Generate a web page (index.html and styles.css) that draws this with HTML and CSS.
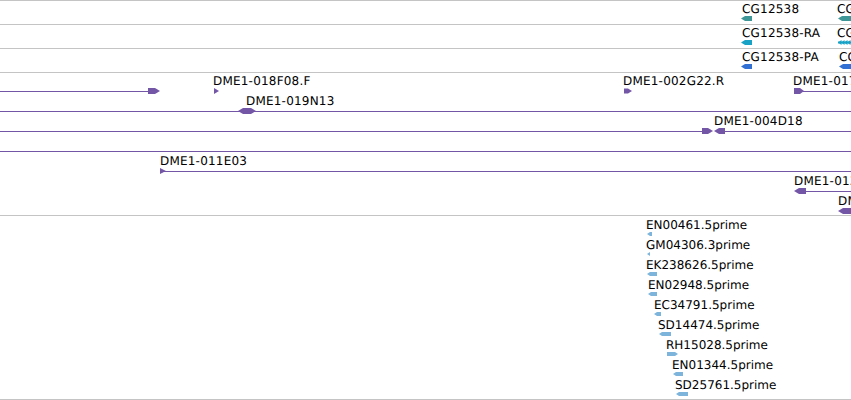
FILE: index.html
```html
<!DOCTYPE html>
<html>
<head>
<meta charset="utf-8">
<link rel="stylesheet" href="styles.css">
</head>
<body>
<div class="view">
  <div class="track gene">
    <div class="feat" style="left:741px"><span class="lbl" style="left:1px">CG12538</span>
      <svg class="g" width="11" height="5" viewBox="0 0 11 5"><polygon class="teal" points="0,2.5 4,0 11,0 11,5 4,5"/></svg></div>
    <div class="feat" style="left:838px"><span class="lbl">CG12539</span>
      <svg class="g" width="13" height="5" viewBox="0 0 13 5"><polygon class="teal" points="0,2.5 4,0 13,0 13,5 4,5"/></svg></div>
  </div>
  <div class="track gene">
    <div class="feat" style="left:741px"><span class="lbl" style="left:1px">CG12538-RA</span>
      <svg class="g" width="11" height="5" viewBox="0 0 11 5"><polygon class="cyan" points="0,2.5 4,0 11,0 11,5 4,5"/></svg></div>
    <div class="feat" style="left:838px"><span class="lbl">CG12539-RA</span>
      <svg class="g" width="13" height="5" viewBox="0 0 13 5"><rect class="cyan" x="0" y="1.5" width="13" height="2"/><polygon class="cyan" points="0,2.5 3.5,0 3.5,5"/><polygon class="cyan" points="3,2.5 6.5,0 6.5,5"/><polygon class="cyan" points="6,2.5 9.5,0 9.5,5"/><polygon class="cyan" points="9,2.5 12.5,0 12.5,5"/></svg></div>
  </div>
  <div class="track gene">
    <div class="feat" style="left:741px"><span class="lbl" style="left:1px">CG12538-PA</span>
      <svg class="g" width="11" height="5" viewBox="0 0 11 5"><polygon class="blue" points="0,2.5 4,0 11,0 11,5 4,5"/></svg></div>
    <div class="feat" style="left:839px"><span class="lbl" style="left:0px">CG12539-PA</span>
      <svg class="g" width="12" height="5" viewBox="0 0 12 5"><polygon class="blue" points="0,2.5 4,0 12,0 12,5 4,5"/></svg></div>
  </div>

  <div class="track dme">
    <div class="row">
      <div class="ln" style="left:0;width:150px"></div>
      <div class="feat" style="left:148px"><svg class="g" width="12" height="6" viewBox="0 0 12 6"><polygon class="pur" points="0,0 7,0 12,3 7,6 0,6"/></svg></div>
      <div class="feat" style="left:214px"><span class="lbl">DME1-018F08.F</span>
        <svg class="g" width="5" height="6" viewBox="0 0 5 6"><polygon class="pur" points="0,0 5,3 0,6"/></svg></div>
      <div class="feat" style="left:624px"><span class="lbl">DME1-002G22.R</span>
        <svg class="g" width="8" height="6" viewBox="0 0 8 6"><polygon class="pur" points="0,0.5 4,0.5 8,3 4,5.5 0,5.5"/></svg></div>
      <div class="ln" style="left:803px;width:48px"></div>
      <div class="feat" style="left:794px"><span class="lbl">DME1-017C11</span>
        <svg class="g" width="10" height="6" viewBox="0 0 10 6"><polygon class="pur" points="0,0 6,0 10,3 6,6 0,6"/></svg></div>
    </div>
    <div class="row">
      <div class="ln" style="left:0;width:851px"></div>
      <div class="feat" style="left:238px"><span class="lbl" style="left:8px">DME1-019N13</span>
        <svg class="g" width="18" height="6" viewBox="0 0 18 6"><polygon class="pur" points="0,3 5,0 13,0 18,3 13,6 5,6"/></svg></div>
    </div>
    <div class="row">
      <div class="ln" style="left:0;width:702px"></div>
      <div class="ln" style="left:724px;width:127px"></div>
      <div class="feat" style="left:702px"><svg class="g" width="11" height="6" viewBox="0 0 11 6"><polygon class="pur" points="0,0 6,0 11,3 6,6 0,6"/></svg></div>
      <div class="feat" style="left:714px"><span class="lbl" style="left:0">DME1-004D18</span>
        <svg class="g" width="11" height="6" viewBox="0 0 11 6"><polygon class="pur" points="0,3 5,0 11,0 11,6 5,6"/></svg></div>
    </div>
    <div class="row">
      <div class="ln" style="left:0;width:851px"></div>
    </div>
    <div class="row">
      <div class="ln" style="left:160px;width:691px"></div>
      <div class="feat" style="left:160px"><span class="lbl" style="left:0">DME1-011E03</span>
        <svg class="g" width="6" height="6" viewBox="0 0 6 6"><polygon class="pur" points="0,0 6,3 0,6"/></svg></div>
    </div>
    <div class="row">
      <div class="ln" style="left:806px;width:45px"></div>
      <div class="feat" style="left:794px"><span class="lbl" style="left:0">DME1-013B07</span>
        <svg class="g" width="12" height="6" viewBox="0 0 12 6"><polygon class="pur" points="0,3 5,0 12,0 12,6 5,6"/></svg></div>
    </div>
    <div class="row">
      <div class="feat" style="left:838px"><span class="lbl" style="left:0">DME1-020A02</span>
        <svg class="g" width="13" height="6" viewBox="0 0 13 6"><polygon class="pur" points="0,3 5,0 13,0 13,6 5,6"/></svg></div>
    </div>
  </div>

  <div class="track est">
    <div class="row"><div class="feat" style="left:647px"><span class="lbl">EN00461.5prime</span>
      <svg class="g" width="5" height="4" viewBox="0 0 5 4"><polygon class="lb" points="0,2 3,0 5,0 5,4 3,4"/></svg></div></div>
    <div class="row"><div class="feat" style="left:647px"><span class="lbl">GM04306.3prime</span>
      <svg class="g" width="3" height="4" viewBox="0 0 3 4"><polygon class="lb" points="0,2 3,0 3,4"/></svg></div></div>
    <div class="row"><div class="feat" style="left:647px"><span class="lbl">EK238626.5prime</span>
      <svg class="g" width="10" height="4" viewBox="0 0 10 4"><polygon class="lb" points="0,2 3,0 10,0 10,4 3,4"/></svg></div></div>
    <div class="row"><div class="feat" style="left:648px"><span class="lbl" style="left:0">EN02948.5prime</span>
      <svg class="g" width="9" height="4" viewBox="0 0 9 4"><polygon class="lb" points="0,2 3,0 9,0 9,4 3,4"/></svg></div></div>
    <div class="row"><div class="feat" style="left:654px"><span class="lbl" style="left:0">EC34791.5prime</span>
      <svg class="g" width="7" height="4" viewBox="0 0 7 4"><polygon class="lb" points="0,2 3,0 7,0 7,4 3,4"/></svg></div></div>
    <div class="row"><div class="feat" style="left:659px"><span class="lbl">SD14474.5prime</span>
      <svg class="g" width="12" height="4" viewBox="0 0 12 4"><polygon class="lb" points="0,2 3,0 12,0 12,4 3,4"/></svg></div></div>
    <div class="row"><div class="feat" style="left:667px"><span class="lbl">RH15028.5prime</span>
      <svg class="g" width="11" height="4" viewBox="0 0 11 4"><polygon class="lb" points="0,0 8,0 11,2 8,4 0,4"/></svg></div></div>
    <div class="row"><div class="feat" style="left:673px"><span class="lbl">EN01344.5prime</span>
      <svg class="g" width="10" height="4" viewBox="0 0 10 4"><polygon class="lb" points="0,2 3,0 10,0 10,4 3,4"/></svg></div></div>
    <div class="row"><div class="feat" style="left:676px"><span class="lbl">SD25761.5prime</span>
      <svg class="g" width="12" height="4" viewBox="0 0 12 4"><polygon class="lb" points="0,2 3,0 12,0 12,4 3,4"/></svg></div></div>
  </div>
</div>
</body>
</html>
```

FILE: styles.css
```css
html, body {
  margin: 0;
  padding: 0;
  overflow: hidden;
  background: #ffffff;
}

.view {
  width: 851px;
  font-family: "DejaVu Sans", "Noto Sans", sans-serif;
  font-size: 12px;
  color: #000000;
  text-rendering: geometricPrecision;
}

.track {
  position: relative;
  overflow: hidden;
  border-top: 1px solid #c4c4c4;
}

.track.gene { height: 23px; }
.track.dme { height: 142px; }
.track.est {
  height: 183px;
  border-bottom: 1px solid #c4c4c4;
}

.row {
  position: relative;
  height: 20px;
}

.feat {
  position: absolute;
  top: 0;
  height: 100%;
}

.lbl {
  position: absolute;
  left: -1px;
  white-space: nowrap;
  line-height: 12px;
  letter-spacing: 0.2px;
}

.gene .lbl { top: 2px; }
.dme .lbl { top: 1.6px; }
.est .lbl { top: 2.6px; letter-spacing: 0; }

.g {
  position: absolute;
  left: 0;
  display: block;
}

.gene .g { top: 15px; }
.dme .g { top: 15px; }
.est .g { top: 16px; }

.ln {
  position: absolute;
  top: 18px;
  height: 1px;
  background: #7456a7;
}

.teal { fill: #3f9696; }
.cyan { fill: #17a2c6; }
.blue { fill: #3370d4; }
.pur { fill: #7456a7; }
.lb { fill: #7db4dc; }
```
